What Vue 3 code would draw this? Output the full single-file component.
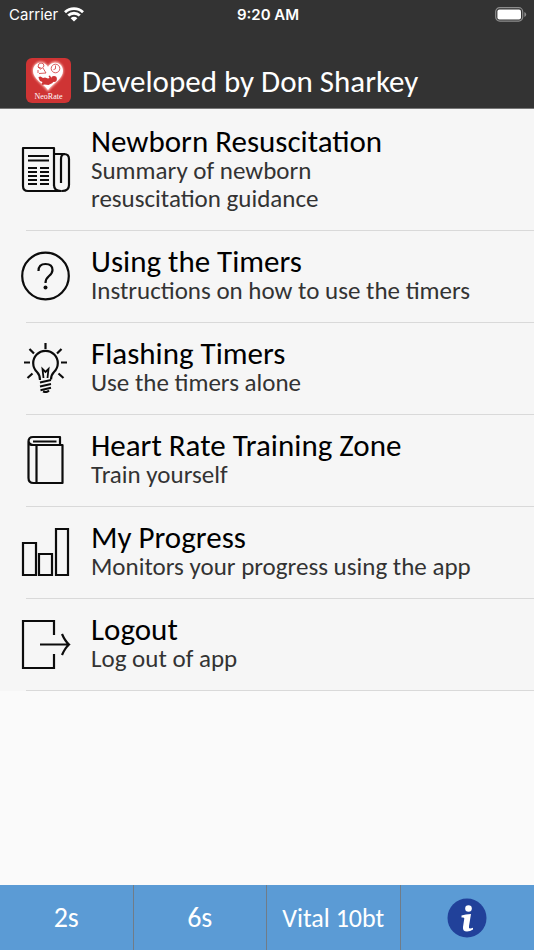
<script setup>
const items = [
  { icon: 'news', title: 'Newborn Resuscitation', text: 'Summary of newborn resuscitation guidance' },
  { icon: 'help', title: 'Using the Timers', text: 'Instructions on how to use the timers' },
  { icon: 'bulb', title: 'Flashing Timers', text: 'Use the timers alone' },
  { icon: 'book', title: 'Heart Rate Training Zone', text: 'Train yourself' },
  { icon: 'bars', title: 'My Progress', text: 'Monitors your progress using the app' },
  { icon: 'exit', title: 'Logout', text: 'Log out of app' },
]
</script>

<template>
  <div class="app">
    <header class="top">
      <div class="status">
        <span class="carrier">
          Carrier
          <svg width="20" height="15" viewBox="0 0 20 15" aria-hidden="true">
            <g fill="none" stroke="#fff" stroke-width="2.8">
              <path d="M1 5.2a13 13 0 0 1 18 0" />
              <path d="M4.2 8.6a8.3 8.3 0 0 1 11.6 0" />
            </g>
            <path d="M6.6 11.2a4.9 4.9 0 0 1 6.8 0L10 14.6z" fill="#fff" />
          </svg>
        </span>
        <span class="time">9:20 AM</span>
        <svg class="battery" width="32" height="15" viewBox="0 0 32 15" aria-hidden="true">
          <rect x=".7" y=".7" width="27" height="13.4" rx="4" fill="none" stroke="#8d8d8d" stroke-width="1.2" />
          <rect x="2.4" y="2.4" width="23.6" height="10" rx="2" fill="#fff" />
          <path d="M29.4 5v5q1.8-.8 1.8-2.5T29.4 5z" fill="#8d8d8d" />
        </svg>
      </div>
      <div class="brand">
        <svg width="45" height="45" viewBox="0 0 45 45" role="img" aria-label="NeoRate">
          <defs>
            <filter id="glow" x="-20%" y="-20%" width="140%" height="140%"><feGaussianBlur stdDeviation="1" /></filter>
          </defs>
          <rect width="45" height="45" rx="6" fill="#cf3434" />
          <path d="M22 33C17 26 7 21 7 13 7 3 18 1 22 9c4-8 15-6 15 4 0 8-10 13-15 20z" fill="#ffc4bc" stroke="#ffc4bc" filter="url(#glow)" />
          <path d="M22 32C17 25 7 21 7 13 7 4 18 2 22 9c4-7 15-5 15 4 0 8-10 12-15 19z" fill="#fff" />
          <g fill="none" stroke="#cf3434" stroke-width=".8">
            <circle cx="29.500" cy="10.500" r="4.300" />
            <path d="M29.500 7.500v3.300l-2 .8" />
            <path d="M12 9q0-4 3-4t3 3l-2 2.500zM12 9l3 2.500M17 10l3 5-7 .500M12 12v3" />
          </g>
          <g fill="#cf3434">
            <circle cx="28" cy="21" r="2.900" />
            <path d="M12.500 19l2-.500 2.500 1.500 2-.500 3 1 1.500-.500-1-2 1.500-.500 2 3.500 2 1-1.500 3-4 2-4-.500-2 .500-1-1 1-2-2.500-1-1-2z" />
          </g>
          <text x="22.500" y="41" text-anchor="middle" class="mark">NeoRate</text>
        </svg>
        <h1>Developed by Don Sharkey</h1>
      </div>
    </header>

    <main>
      <nav class="list">
        <a v-for="item in items" :key="item.icon" class="row" href="#">
          <svg class="icon" width="50" height="50" viewBox="0 0 50 50" fill="none" stroke="#0c0c0c" stroke-width="2.2" aria-hidden="true">
            <template v-if="item.icon === 'news'">
              <path d="M33 41V3H2v38q0 5 5 5h33q-7 0-7-6M33 9h10q5 0 5 5v26q0 6-7 6M40 38V14q0-5 4-5" stroke-linejoin="round" />
              <path d="M7 11h21M7 15.500h21" />
              <path d="M7 23h9M19 23h9M7 27h9M19 27h9M7 31h9M19 31h9M7 35h9M19 35h9M7 39h9M19 39h9" />
            </template>
            <template v-else-if="item.icon === 'help'">
              <circle cx="24.500" cy="25" r="23.300" />
              <path d="M17.500 20q0-7 7-7 7 0 7 6 0 3-3.500 6-3.500 3-3.500 7" />
              <circle cx="24.500" cy="36.500" r="2" fill="#0c0c0c" stroke="none" />
            </template>
            <template v-else-if="item.icon === 'bulb'">
              <path d="M19 37q0-5-3-8a12.300 12.300 0 1 1 17 0q-3 3-3 7.500" />
              <path d="M22.500 35l-1-9 3 3 3-3-1 9" stroke-width="1.800" />
              <path d="M24.500 0v6M8.500 6l4.500 4.500M40.500 6L36 10.500M3 19.500h6M40 19.500h6M6.500 35l5-4.500M42.500 35l-5-4.500" />
              <path d="M19 39.500l11-2.500M19 43.500l11-2.500M19.500 47.200l10.500-2.500M22 48.500q3.500 1.500 6-1" stroke-width="2" />
            </template>
            <template v-else-if="item.icon === 'book'">
              <path d="M39 10V2H12q-4.500 0-4.500 4.500V43q0 5 5 5h29V10H12q-4 0-4.500-4M15.500 10v38M12 6.500h23.500" stroke-linejoin="round" />
            </template>
            <template v-else-if="item.icon === 'bars'">
              <path d="M2 16h13v32H2zM18 27h13v21H18zM35 2h12v46H35z" />
            </template>
            <template v-else>
              <path d="M33 16V2H2v47h31V35M19 25.500h29M41 15q3 7 7 10.500Q44 29 41 36" />
            </template>
          </svg>
          <span class="copy">
            <strong>{{ item.title }}</strong>
            <span :class="['text', { narrow: item.icon === 'news' }]">{{ item.text }}</span>
          </span>
        </a>
      </nav>
    </main>

    <footer class="tabs">
      <button type="button" class="large">2s</button>
      <button type="button" class="large">6s</button>
      <button type="button">Vital 10bt</button>
      <button type="button" aria-label="Information">
        <svg width="40" height="40" viewBox="0 0 40 40" aria-hidden="true">
          <circle cx="20" cy="20" r="19.500" fill="#21419a" />
          <circle cx="21.500" cy="10.500" r="3.300" fill="#fff" />
          <path d="M14.500 17.500q4-1.500 9.500-1.500l-2 12q-.500 2.500 1 2.500 1.500 0 3-.700v1.700q-3 2-6 2-4.500 0-4-4.500l1.300-8.500q.200-1.500-2.800-1z" fill="#fff" />
        </svg>
      </button>
    </footer>
  </div>
</template>

<style>
body {
  margin: 0;
  background: #fafafa;
}
</style>

<style scoped>
.app {
  display: flex;
  flex-direction: column;
  min-height: 100vh;
  background: #fafafa;
  font-family: Carlito, Lato, sans-serif;
  color: #000;
}
.top {
  background: #333;
  color: #fff;
  border-bottom: 1px solid #777;
}
.status {
  display: grid;
  grid-template-columns: 1fr auto 1fr;
  align-items: center;
  height: 28px;
  padding: 0 7px 0 9px;
  font: 15px Inter, sans-serif;
}
.carrier {
  display: flex;
  align-items: center;
  gap: 6px;
}
.time {
  font-weight: 600;
}
.battery {
  justify-self: end;
}
.brand {
  display: flex;
  align-items: center;
  gap: 11px;
  padding: 30px 26px 5px;
}
.mark {
  font: 8px "Liberation Serif", serif;
  fill: #fff;
}
h1 {
  margin: 0;
  font-size: 31px;
  font-weight: 400;
  line-height: 32px;
}
main {
  flex: 1;
}
.list {
  padding-top: 2px;
  background: #f6f6f6;
}
.row {
  display: flex;
  align-items: center;
  gap: 20px;
  padding: 15px 21px 18px;
  color: inherit;
  text-decoration: none;
  background: linear-gradient(#d9d9d9, #d9d9d9) 26px 100% / 100% 1px no-repeat;
}
.icon {
  flex: none;
}
.copy {
  display: flex;
  flex-direction: column;
}
strong {
  font-size: 31px;
  font-weight: 400;
  line-height: 31px;
}
.text {
  font-size: 25px;
  line-height: 28px;
  color: #333;
}
.narrow {
  max-width: 260px;
}
.tabs {
  display: grid;
  grid-template-columns: repeat(4, 1fr);
  height: 65px;
  background: #5b9bd5;
}
button {
  display: flex;
  align-items: center;
  justify-content: center;
  padding: 0;
  border: 0;
  border-right: 1px solid #707c88;
  background: none;
  color: #fff;
  font: inherit;
  font-size: 26px;
}
.large {
  font-size: 28px;
}
button:last-child {
  border-right: 0;
}
</style>
